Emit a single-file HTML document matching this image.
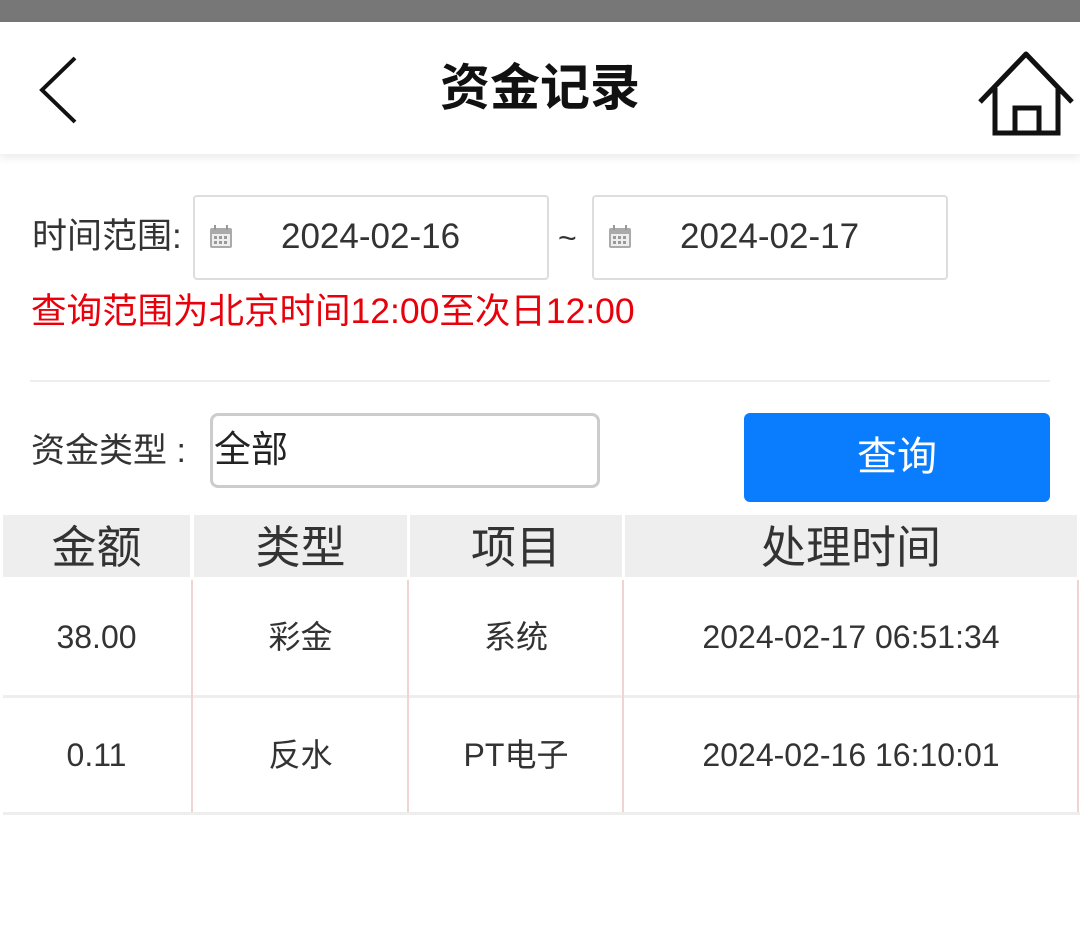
<!DOCTYPE html>
<html><head><meta charset="utf-8"><style>
*{margin:0;padding:0;box-sizing:border-box}
body{width:1080px;height:932px;background:#fff;position:relative;overflow:hidden;font-family:"Liberation Sans","Noto Sans CJK SC",sans-serif;color:#333}
.a{position:absolute}
.box{position:absolute;border:2px solid #ddd;border-radius:4px;background:#fff}
.cal{position:absolute;left:14px;top:28px;width:24px;height:24px}
.date{position:absolute;left:86px;top:20px;font-size:35px;color:#333}
.th{position:absolute;top:515px;height:62px;background:#eee;font-size:45px;color:#333;text-align:center;line-height:66px}
.td{position:absolute;font-size:32px;color:#333;text-align:center;height:115px;line-height:115px}
.vl{position:absolute;width:2px;background:#f0d4d4}
.hl{position:absolute;left:3px;width:1077px;height:3px;background:#eee}
</style></head><body>
<div class="a" style="left:0;top:0;width:1080px;height:22px;background:#777"></div>
<div class="a" style="left:0;top:22px;width:1080px;height:132px;background:#fff;box-shadow:0 4px 8px rgba(0,0,0,0.08)"></div>
<svg class="a" style="left:0;top:22px" width="1080" height="132">
<polyline points="75,36 42,68 75,100" fill="none" stroke="#111" stroke-width="4"/>
<polyline points="980,80 1026,32 1072,80" fill="none" stroke="#111" stroke-width="5" stroke-linejoin="round"/>
<polyline points="995,66 995,111 1058,111 1058,66" fill="none" stroke="#111" stroke-width="5"/>
<polyline points="1015,111 1015,86 1039,86 1039,111" fill="none" stroke="#111" stroke-width="5"/>
</svg>
<div class="a" style="left:0;width:1080px;top:58px;text-align:center;font-size:50px;font-weight:bold;color:#111;line-height:60px">资金记录</div>

<div class="a" style="left:32px;top:216px;font-size:35px;line-height:42px">时间范围:</div>
<div class="box" style="left:193px;top:195px;width:356px;height:85px">
<svg class="cal" viewBox="0 0 24 24"><rect x="1" y="3" width="22" height="20" rx="2" fill="#aaa"/><rect x="3" y="9" width="18" height="12" fill="#eee"/><g fill="#999"><rect x="5" y="11" width="3" height="3"/><rect x="10" y="11" width="3" height="3"/><rect x="15" y="11" width="3" height="3"/><rect x="5" y="16" width="3" height="3"/><rect x="10" y="16" width="3" height="3"/><rect x="15" y="16" width="3" height="3"/></g><rect x="5" y="0" width="2" height="5" fill="#999"/><rect x="17" y="0" width="2" height="5" fill="#999"/></svg>
<div class="date">2024-02-16</div></div>
<div class="a" style="left:558px;top:220px;font-size:32px">~</div>
<div class="box" style="left:592px;top:195px;width:356px;height:85px">
<svg class="cal" viewBox="0 0 24 24"><rect x="1" y="3" width="22" height="20" rx="2" fill="#aaa"/><rect x="3" y="9" width="18" height="12" fill="#eee"/><g fill="#999"><rect x="5" y="11" width="3" height="3"/><rect x="10" y="11" width="3" height="3"/><rect x="15" y="11" width="3" height="3"/><rect x="5" y="16" width="3" height="3"/><rect x="10" y="16" width="3" height="3"/><rect x="15" y="16" width="3" height="3"/></g><rect x="5" y="0" width="2" height="5" fill="#999"/><rect x="17" y="0" width="2" height="5" fill="#999"/></svg>
<div class="date">2024-02-17</div></div>
<div class="a" style="left:31px;top:290px;font-size:35.5px;color:#e8000a;line-height:42px;white-space:nowrap">查询范围为北京时间12:00至次日12:00</div>
<div class="a" style="left:30px;top:380px;width:1020px;height:2px;background:#eee"></div>

<div class="a" style="left:31px;top:430px;font-size:34px;line-height:42px;white-space:nowrap">资金类型 :</div>
<div class="a" style="left:210px;top:413px;width:390px;height:75px;border:3px solid #ccc;border-radius:8px"></div>
<div class="a" style="left:214px;top:428px;font-size:37px;color:#222;line-height:44px">全部</div>
<div class="a" style="left:744px;top:413px;width:306px;height:89px;background:#0a7cfe;border-radius:6px;color:#fff;font-size:40px;text-align:center;line-height:89px">查询</div>

<div class="th" style="left:3px;width:187px">金额</div>
<div class="th" style="left:194px;width:213px">类型</div>
<div class="th" style="left:410px;width:212px">项目</div>
<div class="th" style="left:625px;width:452px">处理时间</div>

<div class="td" style="left:3px;width:187px;top:580px">38.00</div>
<div class="td" style="left:194px;width:213px;top:580px">彩金</div>
<div class="td" style="left:410px;width:212px;top:580px">系统</div>
<div class="td" style="left:625px;width:452px;top:580px">2024-02-17 06:51:34</div>
<div class="hl" style="top:695px"></div>
<div class="td" style="left:3px;width:187px;top:698px">0.11</div>
<div class="td" style="left:194px;width:213px;top:698px">反水</div>
<div class="td" style="left:410px;width:212px;top:698px">PT电子</div>
<div class="td" style="left:625px;width:452px;top:698px">2024-02-16 16:10:01</div>
<div class="hl" style="top:812px"></div>
<div class="vl" style="left:191px;top:580px;height:232px"></div>
<div class="vl" style="left:407px;top:580px;height:232px"></div>
<div class="vl" style="left:622px;top:580px;height:232px"></div>
<div class="vl" style="left:1077px;top:580px;height:232px"></div>
</body></html>
